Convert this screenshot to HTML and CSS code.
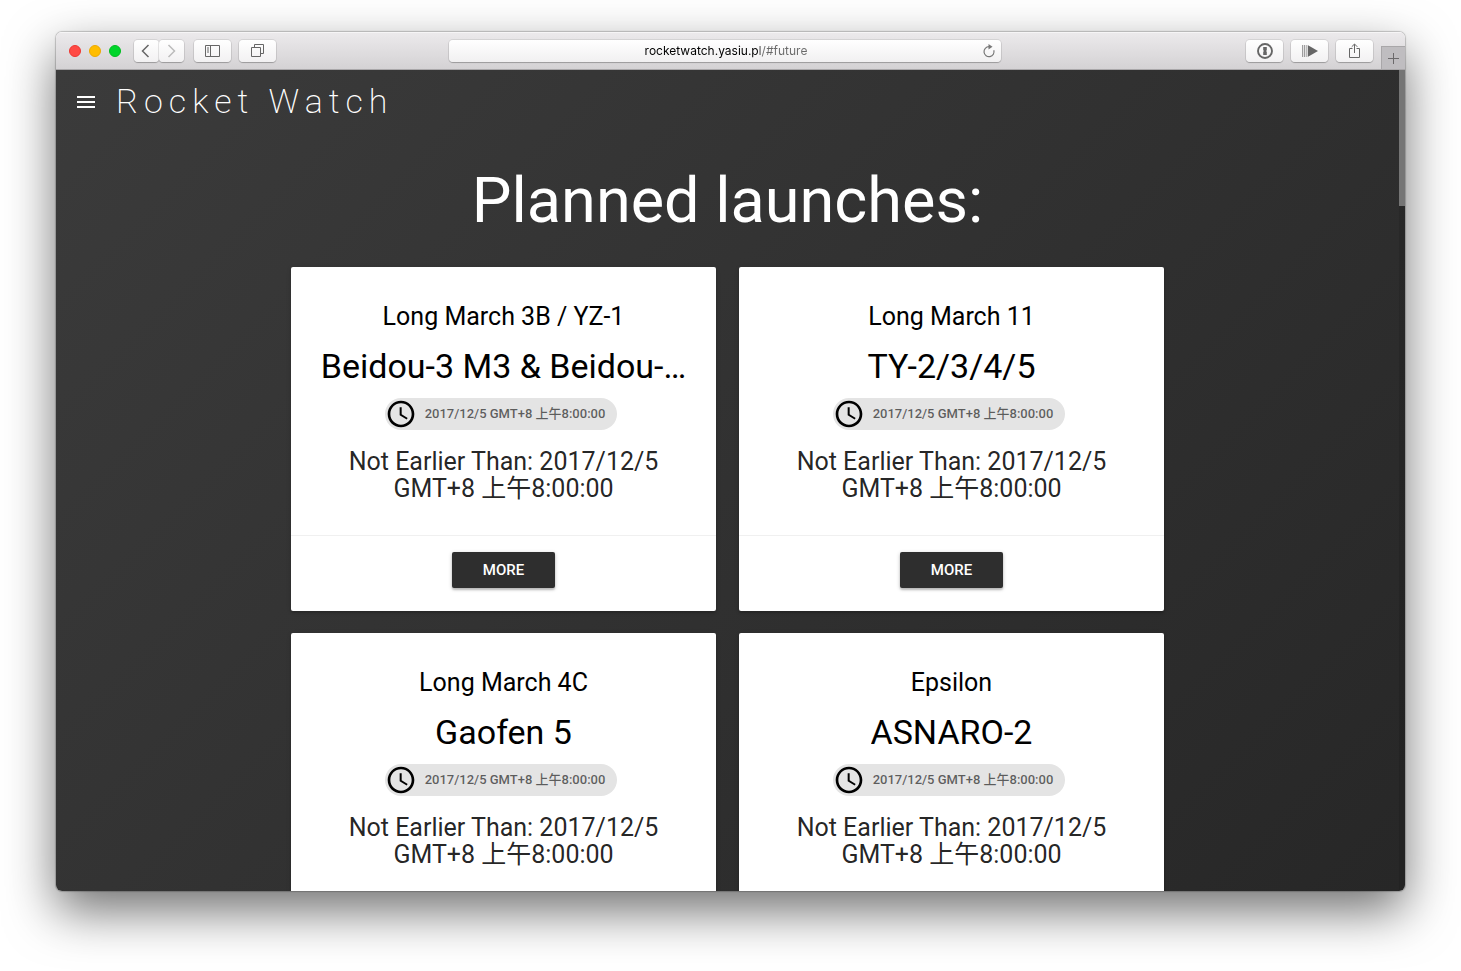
FILE: index.html
```
<!DOCTYPE html>
<html lang="en">
<head>
<meta charset="utf-8">
<title>Rocket Watch</title>
<link rel="stylesheet" href="styles.css">
</head>
<body>
<div class="window">
  <header class="toolbar">
    <div class="toolbar-left">
      <div class="lights">
        <button class="light light-close" aria-label="Close"></button>
        <button class="light light-min" aria-label="Minimize"></button>
        <button class="light light-zoom" aria-label="Zoom"></button>
      </div>
      <div class="history">
        <button class="tool tool-small" aria-label="Back"><svg width="25" height="22" viewBox="0 0 25 22"><path d="M14.500 5 8.500 11l6 6" fill="none" stroke="#666" stroke-width="1.500"/></svg></button>
        <button class="tool tool-small" aria-label="Forward"><svg width="25" height="22" viewBox="0 0 25 22"><path d="M9.500 5 15.500 11l-6 6" fill="none" stroke="#bbb" stroke-width="1.500"/></svg></button>
      </div>
      <button class="tool" aria-label="Show sidebar"><svg width="15" height="12" viewBox="0 0 15 12"><path d="M.5.500h14v11H.5zM5.500.500v11M2 3h2M2 5h2M2 7h2" fill="none" stroke="#666"/></svg></button>
      <button class="tool" aria-label="Show all tabs"><svg width="13" height="13" viewBox="0 0 13 13"><path d="M.5 3.500h9v9h-9zM3.500 3.500v-3h9v9h-3" fill="none" stroke="#666"/></svg></button>
    </div>
    <div class="address">
      <input class="address-input" type="text" aria-label="Address" value="rocketwatch.yasiu.pl/#future">
      <button class="reload" aria-label="Reload"><svg width="14" height="14" viewBox="0 0 14 14"><path d="M11.800 6.200A5 5 0 1 1 7 2.700" fill="none" stroke="#777" stroke-width="1.200"/><path d="M6.500 0 10.500 2.800 6.500 5.400z" fill="#777"/></svg></button>
    </div>
    <div class="toolbar-right">
      <button class="tool" aria-label="Password manager"><svg width="16" height="16" viewBox="0 0 16 16"><circle cx="8" cy="8" r="7" fill="none" stroke="#666" stroke-width="1.900"/><path d="M6.200 4h3.600v3.200l-.8.800.8.800V12H6.200V8.800L7 8l-.8-.8z" fill="#666"/></svg></button>
      <button class="tool" aria-label="Play"><svg width="16" height="12" viewBox="0 0 16 12"><path d="M.7 0v12M2.700 0v12" stroke="#888" stroke-width="1"/><path d="M4.800 0v12" stroke="#aaa" stroke-width="1.200"/><path d="M6 .3 16 6 6 11.700z" fill="#666"/></svg></button>
      <button class="tool" aria-label="Share"><svg width="11" height="16" viewBox="0 0 11 16"><path d="M3.500 5.500h-3v9h10v-9h-3M5.500 10V1.200M2.700 3.800 5.500 1l2.800 2.800" fill="none" stroke="#666"/></svg></button>
      <button class="new-tab" aria-label="New tab"><svg width="11" height="11" viewBox="0 0 11 11"><path d="M0 5.500h11M5.500 0v11" stroke="#6b696b" fill="none"/></svg></button>
    </div>
  </header>

  <div class="viewport">
    <div class="page">
      <nav class="nav">
        <button class="menu" aria-label="Menu"><svg width="24" height="24" viewBox="0 0 24 24"><path d="M3 18h18v-2H3v2zm0-5h18v-2H3v2zm0-7v2h18V6H3z" fill="#fff"/></svg></button>
        <a class="brand" href="#future">Rocket Watch</a>
      </nav>
      <main class="main">
        <h1 class="title">Planned launches:</h1>
        <div class="cards">
          <article class="card">
            <div class="card-content">
              <h5 class="rocket">Long March 3B / YZ-1</h5>
              <h4 class="mission">Beidou-3 M3 &amp; Beidou-…</h4>
              <div class="chip"><svg class="clock" viewBox="0 0 24 24"><path d="M11.990 2C6.470 2 2 6.480 2 12s4.470 10 9.990 10C17.520 22 22 17.520 22 12S17.520 2 11.990 2zM12 20c-4.420 0-8-3.580-8-8s3.580-8 8-8 8 3.580 8 8-3.580 8-8 8zM12.500 7H11v6l5.250 3.150.75-1.230-4.500-2.670z"/></svg>2017/12/5 GMT+8 上午8:00:00</div>
              <p class="net">Not Earlier Than: 2017/12/5 GMT+8 上午8:00:00</p>
            </div>
            <div class="card-action"><button class="more">More</button></div>
          </article>
          <article class="card">
            <div class="card-content">
              <h5 class="rocket">Long March 11</h5>
              <h4 class="mission">TY-2/3/4/5</h4>
              <div class="chip"><svg class="clock" viewBox="0 0 24 24"><path d="M11.990 2C6.470 2 2 6.480 2 12s4.470 10 9.990 10C17.520 22 22 17.520 22 12S17.520 2 11.990 2zM12 20c-4.420 0-8-3.580-8-8s3.580-8 8-8 8 3.580 8 8-3.580 8-8 8zM12.500 7H11v6l5.250 3.150.75-1.230-4.500-2.670z"/></svg>2017/12/5 GMT+8 上午8:00:00</div>
              <p class="net">Not Earlier Than: 2017/12/5 GMT+8 上午8:00:00</p>
            </div>
            <div class="card-action"><button class="more">More</button></div>
          </article>
          <article class="card">
            <div class="card-content">
              <h5 class="rocket">Long March 4C</h5>
              <h4 class="mission">Gaofen 5</h4>
              <div class="chip"><svg class="clock" viewBox="0 0 24 24"><path d="M11.990 2C6.470 2 2 6.480 2 12s4.470 10 9.990 10C17.520 22 22 17.520 22 12S17.520 2 11.990 2zM12 20c-4.420 0-8-3.580-8-8s3.580-8 8-8 8 3.580 8 8-3.580 8-8 8zM12.500 7H11v6l5.250 3.150.75-1.230-4.500-2.670z"/></svg>2017/12/5 GMT+8 上午8:00:00</div>
              <p class="net">Not Earlier Than: 2017/12/5 GMT+8 上午8:00:00</p>
            </div>
          </article>
          <article class="card">
            <div class="card-content">
              <h5 class="rocket">Epsilon</h5>
              <h4 class="mission">ASNARO-2</h4>
              <div class="chip"><svg class="clock" viewBox="0 0 24 24"><path d="M11.990 2C6.470 2 2 6.480 2 12s4.470 10 9.990 10C17.520 22 22 17.520 22 12S17.520 2 11.990 2zM12 20c-4.420 0-8-3.580-8-8s3.580-8 8-8 8 3.580 8 8-3.580 8-8 8zM12.500 7H11v6l5.250 3.150.75-1.230-4.500-2.670z"/></svg>2017/12/5 GMT+8 上午8:00:00</div>
              <p class="net">Not Earlier Than: 2017/12/5 GMT+8 上午8:00:00</p>
            </div>
          </article>
        </div>
      </main>
    </div>
    <div class="scrollbar"><div class="thumb"></div></div>
  </div>
</div>
</body>
</html>
```
FILE: styles.css
```
* { box-sizing: border-box; }

body {
  margin: 0;
  height: 100vh;
  padding: 32px 56px 80px;
  display: flex;
  background: #fff;
  overflow: hidden;
  font-family: Roboto, "Noto Sans CJK SC", sans-serif;
}

button {
  font: inherit;
  border: 0;
  padding: 0;
  background: none;
}

svg { display: block; }

.window {
  flex: 1;
  min-width: 0;
  display: flex;
  flex-direction: column;
  border-radius: 6px;
  overflow: hidden;
  box-shadow: 0 0 1px 1px rgba(0, 0, 0, .2), 0 20px 50px rgba(0, 0, 0, .56);
}

/* Browser toolbar */
.toolbar {
  flex: none;
  height: 38px;
  display: grid;
  grid-template-columns: 393fr 552fr 404fr;
  align-items: center;
  background: linear-gradient(#eceaec, #d4d2d4);
  border-bottom: 1px solid #a9a7a9;
  box-shadow: inset 0 1px #f6f5f6;
}

.toolbar-left,
.toolbar-right {
  display: flex;
  align-items: center;
  gap: 8px;
}

.toolbar-left { padding-left: 13px; }

.lights {
  display: flex;
  gap: 8px;
  margin-right: 5px;
}

.light {
  width: 12px;
  height: 12px;
  border-radius: 50%;
}

.light-close { background: #ff4a45; border: 1px solid #ee3631; }
.light-min { background: #ffbd00; border: 1px solid #eda900; }
.light-zoom { background: #00d52b; border: 1px solid #00bd20; }

.history {
  display: flex;
  margin-right: 2px;
}

.tool {
  width: 37px;
  height: 22px;
  display: flex;
  align-items: center;
  justify-content: center;
  border-radius: 4px;
  background: linear-gradient(#fff, #f2f1f2);
  box-shadow: 0 0 0 1px rgba(0, 0, 0, .08), 0 1px 1px rgba(0, 0, 0, .22);
}

.tool-small { width: 25px; }

.address {
  display: flex;
  align-items: center;
  height: 22px;
  border-radius: 4px;
  background: linear-gradient(#fff, #f1f0f1);
  box-shadow: 0 0 0 1px rgba(0, 0, 0, .08), 0 1px 1px rgba(0, 0, 0, .22);
}

.address-input {
  flex: 1;
  min-width: 0;
  height: 22px;
  padding: 0 0 0 22px;
  border: 0;
  outline: 0;
  text-align: center;
  font: 12px/22px Inter, sans-serif;
  /* host in black, path in grey */
  color: transparent;
  background: linear-gradient(90deg, #000 calc(50% + 45px), #6a6a6a calc(50% + 45px));
  -webkit-background-clip: text;
  background-clip: text;
}

.reload { margin: 0 5px 0 1px; }

.toolbar-right {
  align-self: stretch;
  justify-content: flex-end;
}

.new-tab {
  width: 24px;
  height: 23px;
  align-self: flex-end;
  display: flex;
  align-items: center;
  justify-content: center;
  background: #bfbdc0;
  border: solid #a9a7a9;
  border-width: 1px 0 0 1px;
}

/* Web page */
.viewport {
  flex: 1;
  min-height: 0;
  display: flex;
  background: linear-gradient(135deg, #3b3b3b, #272727);
}

.page {
  flex: 1;
  min-width: 0;
  overflow: hidden;
}

.scrollbar {
  width: 6px;
  background: rgba(0, 0, 0, .1);
}

.thumb {
  height: 136px;
  background: #757575;
}

.nav {
  height: 64px;
  padding-left: 18px;
  display: flex;
  align-items: center;
  gap: 18px;
}

.brand {
  padding-bottom: 2px;
  color: #fff;
  font-size: 34px;
  line-height: 62px;
  font-weight: 200;
  letter-spacing: 6px;
  text-decoration: none;
}

.main {
  width: 65%;
  margin: 0 auto;
}

.title {
  margin: 32px 0 31px;
  color: #fff;
  font-size: 63px;
  line-height: 70px;
  font-weight: 400;
  text-align: center;
}

.cards {
  display: grid;
  grid-template-columns: repeat(2, minmax(0, 1fr));
  gap: 22px 23px;
}

.card {
  background: #fff;
  border-radius: 2px;
  box-shadow: 0 2px 2px rgba(0, 0, 0, .14), 0 1px 5px rgba(0, 0, 0, .12);
  text-align: center;
}

.card-content {
  padding: 36px 28px 33px;
  display: flex;
  flex-direction: column;
  align-items: center;
}

.rocket,
.mission,
.net {
  margin: 0;
  max-width: 100%;
  font-weight: 400;
}

.rocket,
.net {
  font-size: 25px;
  line-height: 27px;
}

.rocket { margin-bottom: 16px; }

.mission {
  margin-bottom: 11px;
  font-size: 34px;
  line-height: 41px;
  overflow: hidden;
  text-overflow: ellipsis;
  white-space: nowrap;
}

.chip {
  height: 32px;
  padding-right: 12px;
  margin: 0 5px 18px 0;
  display: flex;
  align-items: center;
  gap: 8px;
  border-radius: 16px;
  background: #e4e4e4;
  color: rgba(0, 0, 0, .6);
  font-size: 13px;
  line-height: 32px;
  font-weight: 500;
  white-space: nowrap;
}

.clock {
  width: 32px;
  height: 32px;
  fill: #000;
}

.net { color: rgba(0, 0, 0, .87); }

.card-action {
  padding: 16px 24px 23px;
  display: flex;
  justify-content: center;
  border-top: 1px solid #f0f0f0;
}

.more {
  height: 36px;
  padding: 0 31px;
  border-radius: 2px;
  background: #2e2e2e;
  color: #fff;
  font-size: 15px;
  font-weight: 500;
  text-transform: uppercase;
  box-shadow: 0 2px 2px rgba(0, 0, 0, .18), 0 1px 4px rgba(0, 0, 0, .2);
}
```
